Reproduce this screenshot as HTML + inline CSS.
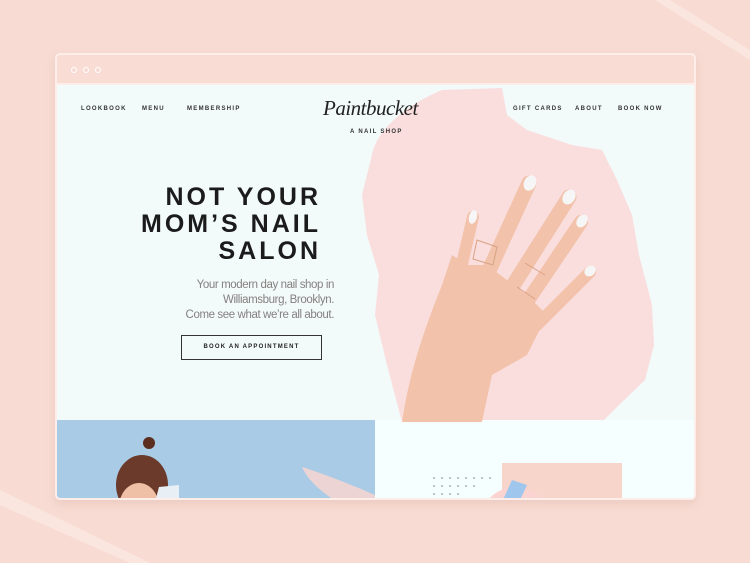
<!DOCTYPE html>
<html><head><meta charset="utf-8"><style>
*{margin:0;padding:0;box-sizing:border-box}
body{width:750px;height:563px;background:#f8dcd3;position:relative;overflow:hidden;font-family:"Liberation Sans",sans-serif}
.abs{position:absolute}
.win{left:55px;top:53px;width:641px;height:447px;border:2px solid #fdeee9;border-radius:5px;overflow:hidden;background:#f3fafa;box-shadow:0 4px 10px rgba(200,150,140,.25)}
.bar{left:0;top:0;width:100%;height:30px;background:#f9dcd3;border-bottom:2px solid #fdeee9}
.dot{top:12px;width:6px;height:6px;border-radius:50%;border:1.5px solid #fff}
.nav{top:51px;font-size:6px;font-weight:bold;letter-spacing:1.3px;color:#333}
.h1{right:373px;top:129px;text-align:right;font-size:25px;font-weight:bold;letter-spacing:3px;line-height:27px;color:#1b1b1b}
.p{right:360px;top:223px;text-align:right;font-size:11.5px;line-height:15px;color:#858080;letter-spacing:-.4px}
.btn{left:124px;top:280px;width:141px;height:25px;border:1.5px solid #333;font-size:6px;font-weight:bold;letter-spacing:1.2px;text-align:center;line-height:22px;color:#222}
</style></head><body>
<svg class="abs" style="left:0;top:0" width="750" height="563">
<path d="M670 0 L750 50 L750 60 L655 0Z" fill="#fbe6df"/>
<path d="M0 490 L150 563 L130 563 L0 505Z" fill="#fbe6df"/>
</svg>
<div class="abs win">
<div class="abs bar"></div>
<div class="abs dot" style="left:14px"></div><div class="abs dot" style="left:26px"></div><div class="abs dot" style="left:38px"></div>
<svg class="abs" style="left:0;top:0" width="641" height="447">
<path d="M315 100 C320 70 360 45 385 35 L445 33 L450 60 L470 75 L515 90 L545 95 L560 125 L575 160 L582 200 L595 250 L597 290 L588 325 L560 352 L545 367 L345 367 L330 310 L318 260 L322 220 L310 180 L305 140Z" fill="#fbdada" opacity=".9"/>
<rect x="0" y="365" width="318" height="82" fill="#a9cbe5"/>
<rect x="318" y="365" width="323" height="82" fill="#f6ffff"/>
<rect x="445" y="408" width="120" height="39" fill="#f8d5cb"/>
<g fill="#777">
<circle cx="377" cy="423" r=".8"/><circle cx="385" cy="423" r=".8"/><circle cx="393" cy="423" r=".8"/><circle cx="401" cy="423" r=".8"/><circle cx="409" cy="423" r=".8"/><circle cx="417" cy="423" r=".8"/><circle cx="425" cy="423" r=".8"/><circle cx="433" cy="423" r=".8"/>
<circle cx="377" cy="431" r=".8"/><circle cx="385" cy="431" r=".8"/><circle cx="393" cy="431" r=".8"/><circle cx="401" cy="431" r=".8"/><circle cx="409" cy="431" r=".8"/><circle cx="417" cy="431" r=".8"/>
<circle cx="377" cy="439" r=".8"/><circle cx="385" cy="439" r=".8"/><circle cx="393" cy="439" r=".8"/><circle cx="401" cy="439" r=".8"/>
</g>
<path d="M430 447 C440 430 470 425 490 447Z" fill="#fbd3d0"/>
<path d="M445 447 L455 425 L470 430 L462 447Z" fill="#9fc6ec"/>
<path d="M245 412 C270 420 300 432 318 440 L318 447 L280 447 C265 437 252 427 245 412Z" fill="#f3d5d3" opacity=".9"/>
<ellipse cx="85" cy="430" rx="26" ry="30" fill="#6b3a2a"/>
<circle cx="92" cy="388" r="6" fill="#5b2e20"/>
<ellipse cx="82" cy="452" rx="20" ry="24" fill="#f0c0a6"/>
<path d="M98 447 L102 432 L122 430 L122 447Z" fill="#e8f0f6"/>
<g stroke="#f2c2aa" stroke-linecap="round" fill="none">
<line x1="400" y1="230" x2="416" y2="162" stroke-width="12"/>
<line x1="430" y1="220" x2="472" y2="128" stroke-width="15"/>
<line x1="455" y1="232" x2="512" y2="142" stroke-width="15"/>
<line x1="468" y1="250" x2="524" y2="167" stroke-width="14"/>
<line x1="480" y1="270" x2="533" y2="217" stroke-width="12"/>
</g>
<path d="M345 367 C352 320 365 280 385 230 L395 200 L410 210 L430 210 L470 240 L490 260 L470 300 L435 320 L425 367Z" fill="#f2c2aa"/>
<g fill="#f6f6f6"><ellipse cx="473" cy="128" rx="6" ry="8" transform="rotate(25 473 128)"/><ellipse cx="512" cy="142" rx="6" ry="8" transform="rotate(32 512 142)"/><ellipse cx="525" cy="166" rx="5" ry="7" transform="rotate(35 525 166)"/><ellipse cx="533" cy="216" rx="5" ry="6" transform="rotate(50 533 216)"/><ellipse cx="416" cy="162" rx="4" ry="7" transform="rotate(15 416 162)"/></g>
<g stroke="#d9a285" stroke-width="1" fill="none"><path d="M420 185 L440 192 L436 210 L416 204Z"/><path d="M468 208 L488 220"/><path d="M460 232 L478 244"/></g>
</svg>
<div class="abs nav" style="left:24px">LOOKBOOK</div>
<div class="abs nav" style="left:85px">MENU</div>
<div class="abs nav" style="left:130px">MEMBERSHIP</div>
<div class="abs nav" style="left:456px">GIFT CARDS</div>
<div class="abs nav" style="left:518px">ABOUT</div>
<div class="abs nav" style="left:561px">BOOK NOW</div>
<div class="abs" style="left:266px;top:41px;font-family:'Liberation Serif',serif;font-style:italic;font-size:21px;color:#222;letter-spacing:-.5px">Paintbucket</div>
<div class="abs" style="left:293px;top:74px;font-size:6px;font-weight:bold;letter-spacing:1.3px;color:#333">A NAIL SHOP</div>
<div class="abs h1">NOT YOUR<br>MOM’S NAIL<br>SALON</div>
<div class="abs p">Your modern day nail shop in<br>Williamsburg, Brooklyn.<br>Come see what we’re all about.</div>
<div class="abs btn">BOOK AN APPOINTMENT</div>
</div>
</body></html>
